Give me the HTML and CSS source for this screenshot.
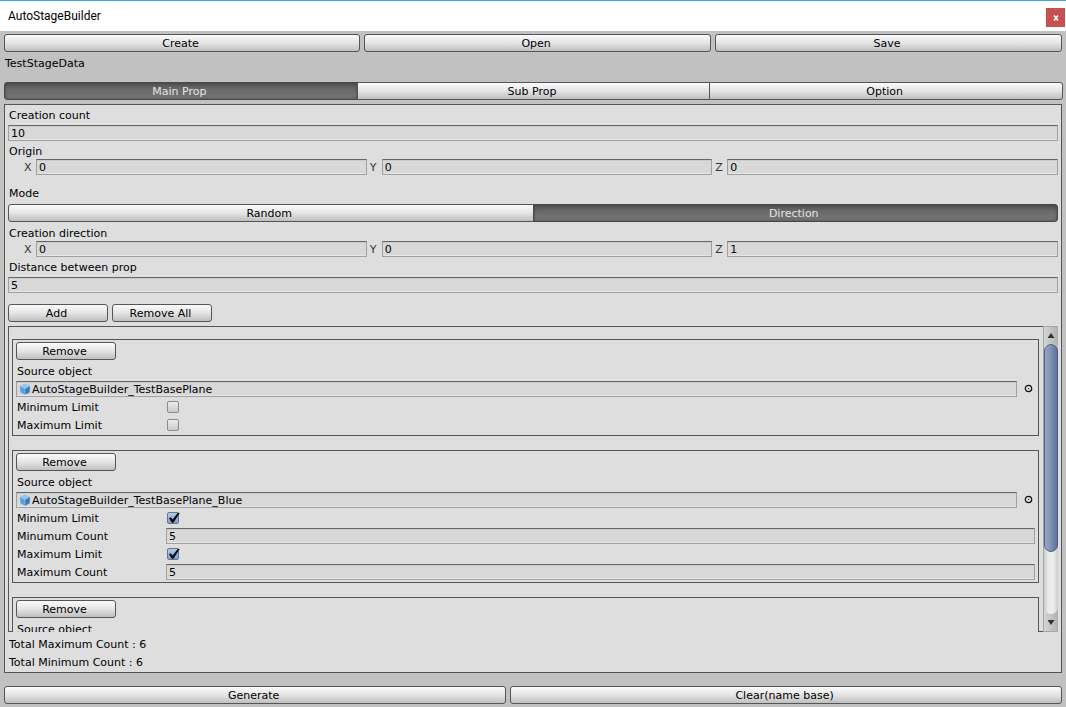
FILE: index.html
```html
<!DOCTYPE html>
<html lang="en">
<head>
<meta charset="utf-8">
<title>AutoStageBuilder</title>
<link rel="stylesheet" href="styles.css">
</head>
<body>
<svg class="defs" aria-hidden="true">
  <symbol id="cube" viewBox="0 0 12 12">
    <path d="M6 .6 11 2.8 6 5.6 1 2.8Z" fill="#8fc6f0"/>
    <path d="M1 2.8 6 5.6V11.8L1.4 9.2Z" fill="#5c9fdb"/>
    <path d="M11 2.8 6 5.6V11.8L10.6 9.2Z" fill="#3878ba"/>
    <path d="M1 2.8 6 5.6 11 2.8M6 5.6V11.6" fill="none" stroke="#a9d6f8" stroke-width=".5"/>
  </symbol>
  <symbol id="target" viewBox="0 0 9 9">
    <circle cx="4.5" cy="4.5" r="3.2" fill="none" stroke="#111" stroke-width="1.2"/>
    <path d="M4 4h1v1H4z" fill="#111"/>
  </symbol>
</svg>
<header class="titlebar">
  <h1 class="title">AutoStageBuilder</h1>
  <button class="close" aria-label="Close"><svg viewBox="0 0 6 6" width="6" height="6"><path d="M1 .5 5 5.5M5 .5 1 5.5" stroke="#fff" stroke-width="1.6"/></svg></button>
</header>
<main class="window">
  <div class="row files">
    <button class="btn">Create</button>
    <button class="btn">Open</button>
    <button class="btn">Save</button>
  </div>
  <p class="label filename">TestStageData</p>
  <div class="tabs">
    <button class="btn active">Main Prop</button>
    <button class="btn">Sub Prop</button>
    <button class="btn">Option</button>
  </div>
  <section class="panel">
    <label class="label" for="count">Creation count</label>
    <input class="field" id="count" value="10">
    <p class="label">Origin</p>
    <div class="vector">
      <label>X<input class="field" value="0"></label>
      <label>Y<input class="field" value="0"></label>
      <label>Z<input class="field" value="0"></label>
    </div>
    <p class="label mode">Mode</p>
    <div class="tabs modes">
      <button class="btn">Random</button>
      <button class="btn active">Direction</button>
    </div>
    <p class="label">Creation direction</p>
    <div class="vector direction">
      <label>X<input class="field" value="0"></label>
      <label>Y<input class="field" value="0"></label>
      <label>Z<input class="field" value="1"></label>
    </div>
    <label class="label" for="distance">Distance between prop</label>
    <input class="field" id="distance" value="5">
    <div class="row actions">
      <button class="btn small">Add</button>
      <button class="btn small">Remove All</button>
    </div>
    <div class="scrollview">
      <div class="list">
        <article class="item">
          <button class="btn small">Remove</button>
          <p class="label">Source object</p>
          <div class="object">
            <button class="field source"><svg class="cube"><use href="#cube"/></svg>AutoStageBuilder_TestBasePlane</button>
            <button class="picker" aria-label="Select object"><svg><use href="#target"/></svg></button>
          </div>
          <div class="prop"><label class="label" for="min1">Minimum Limit</label><input type="checkbox" class="check" id="min1"></div>
          <div class="prop"><label class="label" for="max1">Maximum Limit</label><input type="checkbox" class="check" id="max1"></div>
        </article>
        <article class="item">
          <button class="btn small">Remove</button>
          <p class="label">Source object</p>
          <div class="object">
            <button class="field source"><svg class="cube"><use href="#cube"/></svg>AutoStageBuilder_TestBasePlane_Blue</button>
            <button class="picker" aria-label="Select object"><svg><use href="#target"/></svg></button>
          </div>
          <div class="prop"><label class="label" for="min2">Minimum Limit</label><input type="checkbox" class="check" id="min2" checked></div>
          <div class="prop"><label class="label" for="minc2">Minumum Count</label><input class="field" id="minc2" value="5"></div>
          <div class="prop"><label class="label" for="max2">Maximum Limit</label><input type="checkbox" class="check" id="max2" checked></div>
          <div class="prop"><label class="label" for="maxc2">Maximum Count</label><input class="field" id="maxc2" value="5"></div>
        </article>
        <article class="item last">
          <button class="btn small">Remove</button>
          <p class="label">Source object</p>
        </article>
      </div>
      <div class="scrollbar">
        <button class="arrow up" aria-label="Scroll up"></button>
        <div class="track"><div class="thumb"></div></div>
        <button class="arrow down" aria-label="Scroll down"></button>
      </div>
    </div>
    <p class="label total">Total Maximum Count : 6</p>
    <p class="label">Total Minimum Count : 6</p>
  </section>
  <div class="row footer">
    <button class="btn">Generate</button>
    <button class="btn">Clear(name base)</button>
  </div>
</main>
</body>
</html>
```
FILE: styles.css
```css
* { box-sizing: border-box; }
body {
  margin: 0;
  height: 100vh;
  display: flex;
  flex-direction: column;
  background: #c1c1c1;
  color: #000;
  font: 11px/16px "DejaVu Sans", Verdana, sans-serif;
}
button, input { font: inherit; color: inherit; margin: 0; }
p { margin: 0; }
.defs { display: none; }

.titlebar {
  flex: none;
  display: flex;
  justify-content: space-between;
  align-items: flex-end;
  height: 31px;
  padding: 0 1px 4px 8px;
  border-top: 1px solid #3ba9ee;
  background: #fff;
}
.title { margin: 0; font: 12px/22px Roboto, "Open Sans", sans-serif; }
.close {
  display: flex;
  align-items: center;
  justify-content: center;
  width: 19px;
  height: 19px;
  padding: 0;
  border: 0;
  background: #c75050;
}

.window {
  flex: 1;
  min-height: 0;
  display: flex;
  flex-direction: column;
  padding: 3px 4px;
}
.row { flex: none; display: flex; gap: 4px; }
.row .btn { flex: 1 1 0; }
.files .btn:first-child { flex-grow: 1.027; }
.footer { margin-top: 13px; }
.footer .btn:last-child { flex-grow: 1.1; }

.btn {
  height: 18px;
  padding: 1px 3px 0 0;
  border: 1px solid #555;
  border-radius: 3px;
  background: linear-gradient(#fbfbfb, #e4e4e4 50%, #bfbfbf);
  line-height: 16px;
  text-align: center;
}
.row .btn.small, .btn.small { flex: none; width: 100px; }
.tabs { flex: none; display: flex; margin-right: -1px; }
.tabs .btn { flex: 1 1 0; border-radius: 0; }
.tabs .btn + .btn { margin-left: -1px; }
.tabs .btn:first-child { border-radius: 3px 0 0 3px; }
.tabs .btn:last-child { border-radius: 0 3px 3px 0; }
.tabs .active {
  border-color: #484848;
  background: linear-gradient(#505050, #6a6a6a 40%, #767676);
  box-shadow: inset 0 0 3px #444;
  color: #e4e4e4;
}
.tabs.modes { margin: 3px 0; }

.label {
  flex: none;
  display: block;
  height: 16px;
  padding: 1px 0 0 1px;
  white-space: nowrap;
}
.filename { margin: 3px 0 11px; }

.panel {
  flex: 1;
  min-height: 0;
  display: flex;
  flex-direction: column;
  margin-top: 4px;
  padding: 2px 3px;
  border: 1px solid #555;
  background: #dedede;
}
.field {
  flex: none;
  display: block;
  width: 100%;
  min-width: 0;
  height: 16px;
  padding: 0 2px;
  border: 1px solid #a0a0a0;
  border-top-color: #666;
  border-radius: 0;
  background: #d8d8d8;
  box-shadow: inset 0 1px #cbcbcb, inset 0 -1px #e6e6e6;
  line-height: 14px;
  text-align: left;
  outline: 0;
}
.panel > .field { margin: 2px 0; }
.vector {
  flex: none;
  display: grid;
  grid-template-columns: repeat(3, 1fr);
  gap: 3px;
  height: 16px;
  padding-left: 16px;
}
.vector label {
  display: grid;
  grid-template-columns: 12px 1fr;
  color: #333;
  line-height: 18px;
}
.vector .field { color: #000; }
.mode { margin-top: 10px; }
.direction { margin-bottom: 2px; }
.actions { margin: 9px 0 4px; }

.scrollview { flex: 1; min-height: 0; display: flex; }
.list {
  flex: 1;
  min-width: 0;
  overflow-y: auto;
  scrollbar-width: none;
  display: flex;
  flex-direction: column;
  gap: 14px;
  padding: 13px 4px;
  box-shadow: inset 1px 0 #555, inset 0 1px #555, inset 0 -1px #555;
}
.item {
  flex: none;
  padding: 2px 3px;
  border: 1px solid #555;
  background: #dedede;
  display: flex;
  flex-direction: column;
  gap: 2px;
}
.item > .btn { margin-bottom: 1px; }
.last { height: 97px; }
.object { display: flex; }
.source { flex: 1; display: flex; gap: 1px; line-height: 16px; white-space: nowrap; }
.cube { flex: none; width: 12px; height: 12px; margin-top: 1px; }
.picker {
  display: flex;
  align-items: flex-start;
  width: 18px;
  height: 16px;
  padding: 3px 2px 0 7px;
  border: 0;
  background: none;
}
.picker svg { flex: none; width: 9px; height: 9px; }
.prop { display: grid; grid-template-columns: 150px 1fr; align-items: center; }
.check {
  appearance: none;
  width: 12px;
  height: 12px;
  margin-left: 1px;
  border: 1px solid #8a8a8a;
  border-radius: 2px;
  background: linear-gradient(#ececec, #cacaca);
}
.check:checked { border-color: #6a7688; background: linear-gradient(#b4cbea, #7e9fd0); }
.check:checked::after {
  content: "";
  display: block;
  width: 12px;
  height: 12px;
  margin-top: -1px;
  background: #0b0e18;
  clip-path: polygon(8% 52%, 24% 44%, 38% 62%, 82% 6%, 98% 8%, 46% 90%, 32% 90%);
}

.scrollbar {
  flex: none;
  display: flex;
  flex-direction: column;
  width: 15px;
  border: 1px solid #a6a6a6;
  border-right: 0;
  background: linear-gradient(90deg, #d6d6d6, #b0b0b0);
}
.arrow {
  flex: none;
  display: flex;
  align-items: center;
  justify-content: center;
  height: 17px;
  padding: 0;
  border: 0;
  background: none;
}
.arrow::before { content: ""; width: 7px; height: 5px; background: #333; }
.up::before { clip-path: polygon(50% 0, 100% 100%, 0 100%); }
.down::before { clip-path: polygon(0 0, 100% 0, 50% 100%); }
.track {
  flex: 1;
  border-radius: 7px;
  background: linear-gradient(90deg, #c8c8c8, #ececec 30%, #ececec 70%, #c8c8c8);
}
.thumb {
  height: 77%;
  border: 1px solid #4c5f85;
  border-radius: 7px;
  background: linear-gradient(90deg, #97a9c2, #7e94b4 45%, #5b729c);
}
.total { margin: 4px 0 2px; }
```
